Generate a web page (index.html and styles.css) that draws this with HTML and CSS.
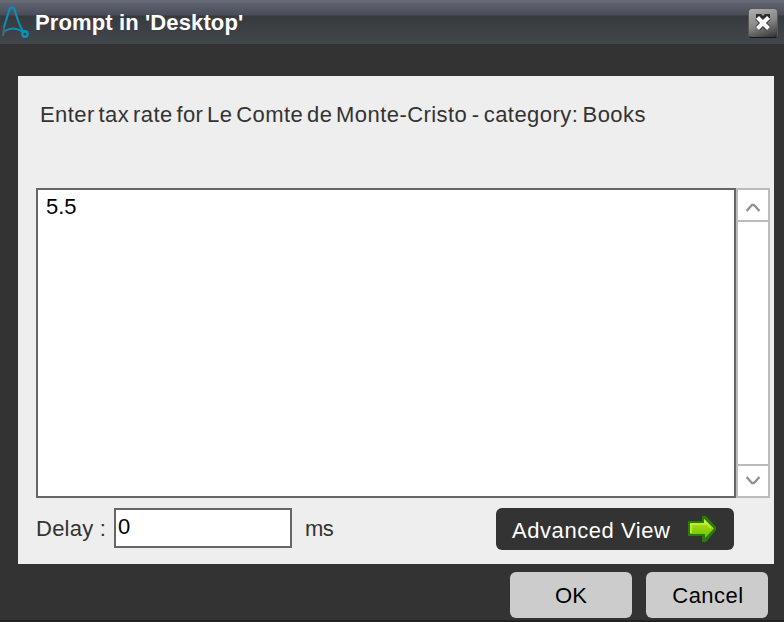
FILE: index.html
```html
<!DOCTYPE html>
<html lang="en">
<head>
<meta charset="utf-8">
<title>Prompt in 'Desktop'</title>
<link rel="stylesheet" href="styles.css">
</head>
<body>
<div class="dialog">
  <header class="titlebar">
    <svg class="logo" width="32" height="44" viewBox="0 0 32 44" fill="none" stroke="#0792bd" stroke-width="2">
      <path d="M4 27C6 22 7 16 9 11c1-5 5-5 6 0 2 7 4 14 8 20"/>
      <path d="M5 31c5-3 11-4 18 1"/>
      <path d="M3 36l1-9M3 33l3-3" stroke="#48697a"/>
      <circle cx="25" cy="34" r="2.7" stroke-width="2.4"/>
    </svg>
    <h1 class="title">Prompt in 'Desktop'</h1>
    <button class="close" aria-label="Close">
      <svg width="30" height="30" viewBox="0 0 30 30">
        <path d="M8 6h5l2 2 2-2h5v4H8z" fill="#2d2d2d"/>
        <path d="M9.5 9.5l11 11M20.500 9.500l-11 11" fill="none" stroke="#2d2d2d" stroke-width="6"/>
        <path d="M9.500 9.500l11 11M20.500 9.500l-11 11" fill="none" stroke="#fff" stroke-width="4.200"/>
      </svg>
    </button>
  </header>
  <main class="panel">
    <p class="message"><span class="lead">Enter tax rate for Le Comte de </span>Monte-Cristo - category: Books</p>
    <div class="editor">
      <div class="text">5.5</div>
      <div class="scrollbar">
        <div class="step"><svg width="30" height="30" viewBox="0 0 30 30"><path d="M8.500 21l5.500-6h2l5.500 6" fill="none" stroke="#929292" stroke-width="2.4"/></svg></div>
        <div class="track"></div>
        <div class="step"><svg width="30" height="30" viewBox="0 0 30 30"><path d="M8.500 11l5.500 6h2l5.500-6" fill="none" stroke="#929292" stroke-width="2.4"/></svg></div>
      </div>
    </div>
    <div class="options">
      <span class="delay">Delay :</span>
      <div class="field">0</div>
      <span class="unit">ms</span>
      <button class="advanced"><span class="advanced-label">Advanced View</span>
        <svg width="30" height="28" viewBox="0 0 30 28">
          <defs><linearGradient id="g" x1="0" y1="0" x2="0" y2="1"><stop offset="0" stop-color="#b5e51c"/><stop offset="1" stop-color="#72c100"/></linearGradient></defs>
          <path d="M1 6h14V1h4l10 11v3L19 27h-4v-6H1z" fill="#267d08"/>
          <path d="M3 8h14V4l10 9.5L18 23v-4H3z" fill="url(#g)"/>
          <path d="M4 18V9h14V6l6 7" fill="none" stroke="#cbed47" stroke-width="1.5"/>
        </svg>
      </button>
    </div>
  </main>
  <footer class="actions">
    <button class="action"><span class="ok">OK</span></button>
    <button class="action"><span class="cancel">Cancel</span></button>
  </footer>
</div>
</body>
</html>
```
FILE: styles.css
```css
* { box-sizing: border-box; }
body { margin: 0; font: 22px/26px "Liberation Sans", Arial, sans-serif; color: #333; }
button { border: 0; padding: 0; font: inherit; }
svg { display: block; flex: none; }
.dialog { width: 784px; height: 622px; background: #333; border-bottom: 2px solid #222; overflow: hidden; }
.titlebar { display: flex; height: 44px; background: linear-gradient(#666a77 0 2px, #5c606d 4px, #4a4d59 15px, #37393d 16px, #42474d 44px); }
.title { flex: 1; margin: 10px 0 0 3px; font-size: 22px; line-height: 26px; font-weight: bold; color: #fff; letter-spacing: .12px; white-space: nowrap; }
.close { width: 30px; height: 30px; margin: 8px 6px 0 0; border: 1px solid #575757; border-bottom-color: #171717; border-radius: 4px; background: linear-gradient(160deg, #b0b0b0, #888 50%, #303030); }
.close svg { margin: -1px; }
.panel { width: 756px; height: 488px; margin: 32px 0 0 18px; padding: 26px 4px 0 18px; background: #eee; }
.message { margin: 0 0 60px 4px; height: 26px; letter-spacing: .4px; word-spacing: -2.2px; white-space: nowrap; }
.lead { word-spacing: -2.8px; }
.editor { display: flex; width: 734px; height: 310px; }
.text { width: 700px; padding: 4px 8px; background: #fff; border: 2px solid #666; color: #000; }
.scrollbar { display: flex; flex-direction: column; width: 34px; background: #fff; border: 2px solid #bbb; }
.step { height: 30px; }
.track { flex: 1; border: solid #bbb; border-width: 2px 0; }
.options { display: flex; align-items: flex-start; padding-top: 10px; }
.delay { width: 78px; padding-top: 8px; letter-spacing: .25px; }
.field { width: 178px; height: 40px; padding: 4px 2px; border: 2px solid #666; background: #fff; color: #000; }
.unit { width: 204px; padding: 8px 0 0 13px; letter-spacing: -.5px; }
.advanced { display: flex; width: 238px; height: 42px; border-radius: 6px; background: #333; color: #fff; }
.advanced-label { width: 175px; margin: 10px 0 0 16px; text-align: left; letter-spacing: .56px; white-space: nowrap; }
.advanced svg { margin-top: 7px; }
.actions { display: flex; gap: 14px; margin: 8px 0 0 510px; }
.action { width: 122px; height: 46px; padding-top: 2px; border-radius: 6px; background: #ccc; color: #000; }
.message { letter-spacing: .44px; }
.cancel { margin-left: 2px; letter-spacing: .5px; }
```
